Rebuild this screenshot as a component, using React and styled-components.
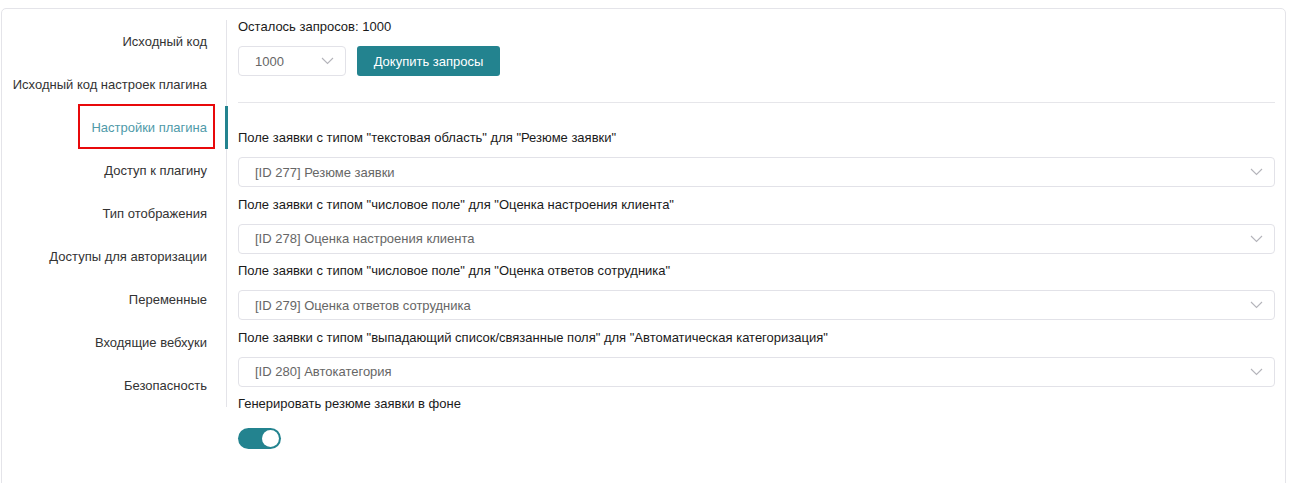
import React from "react";
import styled, { createGlobalStyle } from "styled-components";

const Global = createGlobalStyle`
  html, body { margin: 0; padding: 0; background: #fff; }
  body { font-family: "Liberation Sans", Arial, sans-serif; font-size: 13px; color: #222; }
  * { box-sizing: border-box; }
`;

const Card = styled.div`
  margin: 8px 0 0 1px;
  width: 1285px;
  min-height: 520px;
  border: 1px solid #e4e4e9;
  border-radius: 5px;
  display: flex;
  align-items: flex-start;
`;

const Sidebar = styled.nav`
  width: 225px;
  flex: none;
  margin-top: 11px;
  border-right: 1px solid #e4e4e9;
`;

const NavItem = styled.div`
  height: 43px;
  display: flex;
  align-items: center;
  justify-content: flex-end;
  font-size: 13px;
  color: ${(p) => (p.$active ? "#4f9aa9" : "#333")};
  margin-right: ${(p) => (p.$active ? "-2px" : "0")};
  border-right: ${(p) => (p.$active ? "3px solid #23838f" : "0")};
  padding-right: ${(p) => (p.$active ? "18px" : "19px")};
`;

const Highlight = styled.span`
  position: relative;
  &::after {
    content: "";
    position: absolute;
    top: -16px;
    bottom: -14px;
    left: -13px;
    right: -8px;
    border: 2px solid #e8090b;
  }
`;

const Content = styled.div`
  flex: 1;
  padding: 9px 10px 0 11px;
`;

const Text = styled.div`
  line-height: 18px;
  font-size: 13px;
  color: #1a1a1a;
`;

const Row = styled.div`
  display: flex;
  gap: 11px;
  margin-top: 10px;
`;

const SelectBox = styled.div`
  width: ${(p) => p.$width || "100%"};
  height: 30px;
  border: 1px solid #e2e2e8;
  border-radius: 4px;
  display: flex;
  align-items: center;
  justify-content: space-between;
  padding: 0 11px 0 16px;
  color: #666;
  font-size: 13px;
  background: #fff;
`;

const Button = styled.button`
  height: 30px;
  width: 143px;
  border: 0;
  border-radius: 3px;
  background: #23838f;
  color: #fff;
  font-family: "Liberation Sans", Arial, sans-serif;
  font-size: 13px;
  padding: 0;
`;

const Divider = styled.div`
  height: 1px;
  background: #e6e6ea;
  margin: 26px 0 26px;
`;

const Field = styled.div`
  margin-bottom: 8.5px;
`;

const FieldLabel = styled(Text)`
  margin-bottom: 10px;
`;

const Toggle = styled.div`
  margin-top: 15px;
  width: 43px;
  height: 21px;
  border-radius: 11px;
  background: #23838f;
  display: flex;
  align-items: center;
  justify-content: flex-end;
  padding-right: 2px;
`;

const Knob = styled.div`
  width: 17px;
  height: 17px;
  border-radius: 50%;
  background: #fff;
`;

const Chevron = () => (
  <svg width="13" height="8" viewBox="0 0 13 8" fill="none">
    <path d="M1 1 L6.5 6.5 L12 1" stroke="#b4b4ba" strokeWidth="1.1" />
  </svg>
);

const nav = [
  "Исходный код",
  "Исходный код настроек плагина",
  "Настройки плагина",
  "Доступ к плагину",
  "Тип отображения",
  "Доступы для авторизации",
  "Переменные",
  "Входящие вебхуки",
  "Безопасность",
];

const fields = [
  ['Поле заявки с типом "текстовая область" для "Резюме заявки"', "[ID 277] Резюме заявки"],
  ['Поле заявки с типом "числовое поле" для "Оценка настроения клиента"', "[ID 278] Оценка настроения клиента"],
  ['Поле заявки с типом "числовое поле" для "Оценка ответов сотрудника"', "[ID 279] Оценка ответов сотрудника"],
  ['Поле заявки с типом "выпадающий список/связанные поля" для "Автоматическая категоризация"', "[ID 280] Автокатегория"],
];

export default function App() {
  return (
    <>
      <Global />
      <Card>
        <Sidebar>
          {nav.map((n) =>
            n === "Настройки плагина" ? (
              <NavItem key={n} $active>
                <Highlight>{n}</Highlight>
              </NavItem>
            ) : (
              <NavItem key={n}>{n}</NavItem>
            )
          )}
        </Sidebar>
        <Content>
          <Text>Осталось запросов: 1000</Text>
          <Row>
            <SelectBox $width="108px">
              <span>1000</span>
              <Chevron />
            </SelectBox>
            <Button>Докупить запросы</Button>
          </Row>
          <Divider />
          {fields.map(([label, value]) => (
            <Field key={label}>
              <FieldLabel>{label}</FieldLabel>
              <SelectBox>
                <span>{value}</span>
                <Chevron />
              </SelectBox>
            </Field>
          ))}
          <Text>Генерировать резюме заявки в фоне</Text>
          <Toggle>
            <Knob />
          </Toggle>
        </Content>
      </Card>
    </>
  );
}
